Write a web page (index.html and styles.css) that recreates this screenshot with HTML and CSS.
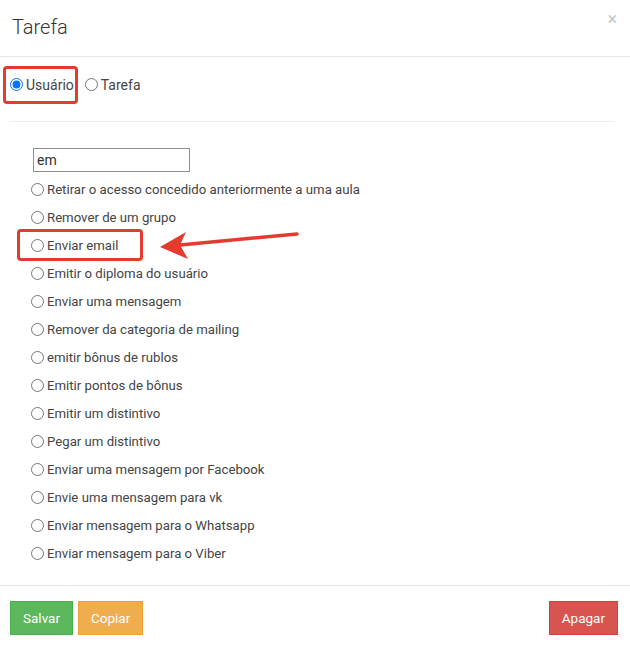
FILE: index.html
```html
<!DOCTYPE html>
<html lang="pt">
<head>
    <meta charset="UTF-8">
    <title>Tarefa</title>
    <link rel="stylesheet" href="styles.css">
</head>
<body>
    <div class="modal">
        <div class="modal-header">
            <h4 class="modal-title">Tarefa</h4>
            <span class="close">&times;</span>
        </div>
        <div class="modal-body">
            <div class="type-row">
                <label class="opt marked-a"><input type="radio" name="type" checked>Usuário</label>
                <label class="opt"><input type="radio" name="type">Tarefa</label>
            </div>
            <div class="divider"></div>
            <input class="search" type="text" value="em">
            <div class="actions">
                <label class="item"><input type="radio" name="act">Retirar o acesso concedido anteriormente a uma aula</label>
                <label class="item"><input type="radio" name="act">Remover de um grupo</label>
                <label class="item marked-b"><input type="radio" name="act">Enviar email</label>
                <label class="item"><input type="radio" name="act">Emitir o diploma do usuário</label>
                <label class="item"><input type="radio" name="act">Enviar uma mensagem</label>
                <label class="item"><input type="radio" name="act">Remover da categoria de mailing</label>
                <label class="item"><input type="radio" name="act">emitir bônus de rublos</label>
                <label class="item"><input type="radio" name="act">Emitir pontos de bônus</label>
                <label class="item"><input type="radio" name="act">Emitir um distintivo</label>
                <label class="item"><input type="radio" name="act">Pegar um distintivo</label>
                <label class="item"><input type="radio" name="act">Enviar uma mensagem por Facebook</label>
                <label class="item"><input type="radio" name="act">Envie uma mensagem para vk</label>
                <label class="item"><input type="radio" name="act">Enviar mensagem para o Whatsapp</label>
                <label class="item"><input type="radio" name="act">Enviar mensagem para o Viber</label>
            </div>
        </div>
        <div class="modal-footer">
            <button class="btn btn-success">Salvar</button>
            <button class="btn btn-warning">Copiar</button>
            <span class="spacer"></span>
            <button class="btn btn-danger">Apagar</button>
        </div>
        <svg class="arrow" width="630" height="648" viewBox="0 0 630 648">
            <line x1="297" y1="234" x2="180" y2="245" stroke="#e53a2f" stroke-width="3.5" stroke-linecap="round"/>
            <polygon points="160,247 186,232 180,245 188,259" fill="#e53a2f"/>
        </svg>
    </div>
</body>
</html>
```

FILE: styles.css
```css
body {
    margin: 0;
    background: #fff;
    font-family: Roboto, "Liberation Sans", sans-serif;
    font-size: 14px;
    color: #333;
}
.modal {
    position: relative;
    width: 630px;
    height: 648px;
}
.modal-header {
    height: 57px;
    border-bottom: 1px solid #e5e5e5;
    display: flex;
    align-items: center;
    justify-content: space-between;
    padding: 0 12px;
    box-sizing: border-box;
}
.modal-title {
    margin: 0;
    font-size: 20px;
    font-weight: 300;
    color: #333;
    padding-bottom: 2px;
}
.close {
    font-size: 18px;
    color: #c8c8c8;
    margin-top: -20px;
    margin-right: 1px;
}
.modal-body {
    height: 528px;
    box-sizing: border-box;
    padding: 14px 15px 0 9px;
}
.type-row {
    display: flex;
    align-items: center;
    height: 27px;
}
.opt {
    display: flex;
    align-items: center;
    position: relative;
    margin-right: 10px;
    color: #444;
}
input[type=radio] {
    width: 13px;
    height: 13px;
    margin: 0 3px 0 0;
}
.opt input {
    margin-left: 1px;
}
.marked-a::before,
.marked-b::before {
    content: "";
    position: absolute;
    border: 3px solid #e53a2f;
    border-radius: 4px;
}
.marked-a::before {
    left: -6px;
    top: -11px;
    width: 69px;
    height: 32px;
}
.marked-b::before {
    left: 8px;
    top: -2px;
    width: 120px;
    height: 26px;
}
.divider {
    border-top: 1px solid #eee;
    margin: 23px 0 26px;
}
.search {
    display: block;
    margin-left: 24px;
    width: 157px;
    height: 24px;
    box-sizing: border-box;
    border: 1px solid #8f8f8f;
    padding: 0 3px;
    font-family: inherit;
    font-size: 14px;
    color: #333;
}
.actions {
    display: flex;
    flex-direction: column;
    margin-top: 3px;
}
.item {
    position: relative;
    display: flex;
    align-items: center;
    height: 28px;
    padding-left: 22px;
    font-size: 13.2px;
    color: #444;
}
.modal-footer {
    border-top: 1px solid #e5e5e5;
    display: flex;
    align-items: flex-start;
    padding: 15px 12px 0 10px;
    gap: 5px;
}
.spacer {
    flex: 1;
}
.btn {
    height: 34px;
    padding: 0 12px;
    font-family: inherit;
    font-size: 13.5px;
    color: #fff;
    border: 1px solid transparent;
    border-radius: 0;
}
.btn-success {
    background: #5cb85c;
    border-color: #4cae4c;
}
.btn-warning {
    background: #f0ad4e;
    border-color: #eea236;
}
.btn-danger {
    background: #d9534f;
    border-color: #d43f3a;
}
.arrow {
    position: absolute;
    left: 0;
    top: 0;
    pointer-events: none;
}
```
